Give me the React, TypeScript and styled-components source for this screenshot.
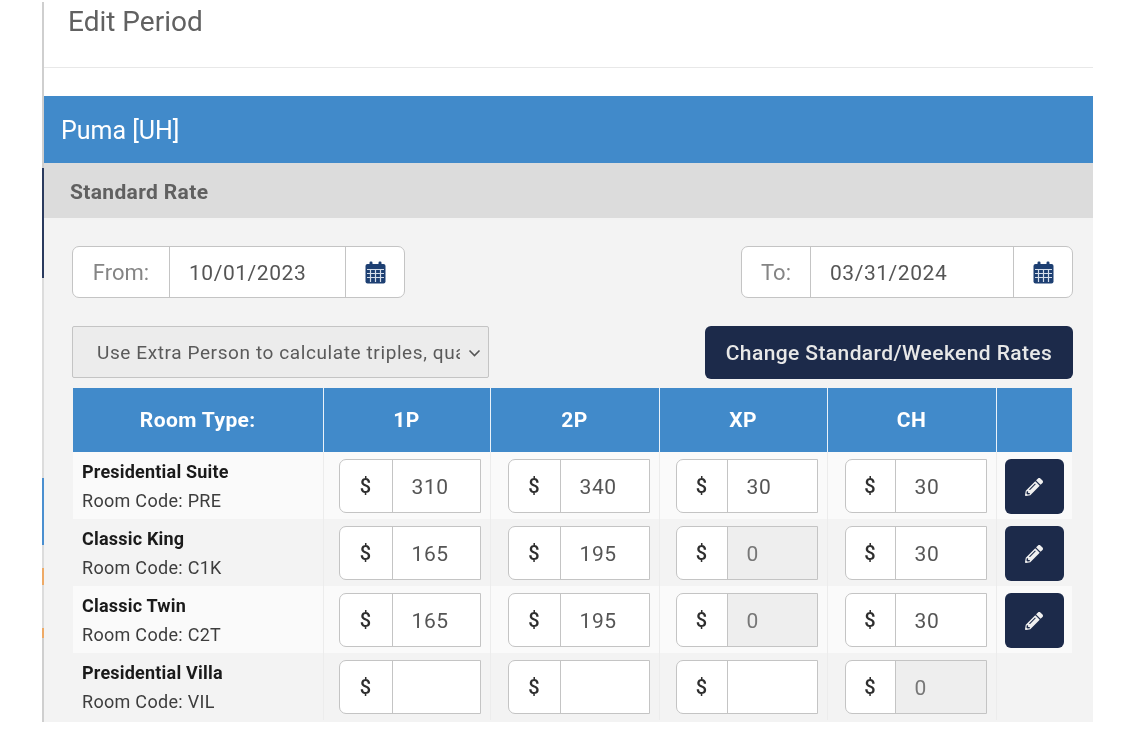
import React from 'react'
import styled, { createGlobalStyle } from 'styled-components'
import { FaPencilAlt } from 'react-icons/fa'

const GlobalStyle = createGlobalStyle`
  html, body {
    margin: 0;
    padding: 0;
    background: #ffffff;
  }
  * {
    box-sizing: border-box;
  }
`

const Page = styled.div`
  display: flex;
  width: 1130px;
  height: 738px;
  padding-top: 2px;
  background: #ffffff;
  font-family: Roboto, "Liberation Sans", sans-serif;
  filter: blur(0.5px);
`

const Rail = styled.div`
  display: flex;
  flex-direction: column;
  width: 2px;
  height: 720px;
  margin-left: 42px;
  flex-shrink: 0;
`

const RailPiece = styled.div<{ $height: number; $color: string }>`
  height: ${p => p.$height}px;
  background: ${p => p.$color};
  flex-shrink: 0;
`

const Content = styled.div`
  width: 1049px;
  display: flex;
  flex-direction: column;
  margin-top: -2px;
`

const TitleBar = styled.div`
  height: 68px;
  padding: 5px 0 0 24px;
  border-bottom: 1px solid #e8e8e8;
  color: #616161;
  font-size: 28px;
  line-height: 33px;
`

const HotelBar = styled.div`
  margin-top: 28px;
  height: 67px;
  padding: 1px 0 0 17px;
  display: flex;
  align-items: center;
  background: #418aca;
  color: #ffffff;
  font-size: 25px;
`

const RateBar = styled.div`
  height: 55px;
  padding: 2px 0 0 26px;
  display: flex;
  align-items: center;
  background: #dcdcdc;
  color: #606060;
  font-size: 21px;
  font-weight: 700;
  letter-spacing: 0.35px;
`

const Panel = styled.div`
  height: 504px;
  padding: 28px 20px 0 28px;
  background: #f3f3f3;
`

const DateRow = styled.div`
  display: flex;
  justify-content: space-between;
`

const DateGroup = styled.div<{ $width: number }>`
  display: flex;
  width: ${p => p.$width}px;
  height: 52px;
  background: #ffffff;
  border: 1px solid #c4c4c4;
  border-radius: 7px;
  color: #555555;
  font-size: 21px;
`

const DateLabel = styled.div<{ $width: number }>`
  width: ${p => p.$width}px;
  padding-top: 1px;
  display: flex;
  align-items: center;
  justify-content: center;
  flex-shrink: 0;
  border-right: 1px solid #c4c4c4;
  color: #858585;
  font-size: 22px;
`

const DateValue = styled.div`
  flex: 1;
  display: flex;
  align-items: center;
  padding: 1px 0 0 19px;
  letter-spacing: 0.55px;
`

const DateIcon = styled.div`
  width: 59px;
  display: flex;
  align-items: center;
  justify-content: center;
  flex-shrink: 0;
  border-left: 1px solid #c4c4c4;
`

const ActionRow = styled.div`
  display: flex;
  justify-content: space-between;
  margin-top: 28px;
`

const RuleSelect = styled.div`
  position: relative;
  width: 417px;
  height: 52px;
  padding: 1px 0 0 24px;
  display: flex;
  align-items: center;
  background: #ececec;
  border: 1px solid #c4c4c4;
  border-radius: 2px;
  color: #5a5a5a;
  font-size: 19px;
  letter-spacing: 0.6px;
`

const RuleText = styled.span`
  width: 363px;
  overflow: hidden;
  white-space: nowrap;
`

const Chevron = styled.svg`
  position: absolute;
  right: 7px;
  top: 22px;
`

const ChangeButton = styled.div`
  width: 368px;
  height: 53px;
  display: flex;
  align-items: center;
  justify-content: center;
  background: #1c2a4a;
  border-radius: 6px;
  color: #e8e8e8;
  font-size: 21px;
  font-weight: 500;
  letter-spacing: 0.4px;
`

const RateTable = styled.table`
  width: 999px;
  margin: 9px 0 0 1px;
  border-collapse: collapse;
  table-layout: fixed;
`

const HeadCell = styled.th`
  height: 64px;
  padding: 0;
  background: #418aca;
  border-left: 1px solid #eaf2f9;
  color: #ffffff;
  font-size: 21px;
  font-weight: 700;
  letter-spacing: 0.4px;
  text-align: center;
  &:first-child {
    border-left: none;
  }
`

const RateRow = styled.tr<{ $shade: boolean }>`
  height: 67px;
  background: ${p => (p.$shade ? '#f3f3f3' : '#fafafa')};
`

const NameCell = styled.td`
  padding: 1px 0 0 9px;
  vertical-align: middle;
`

const RoomName = styled.div`
  color: #1a1a1a;
  font-size: 18px;
  font-weight: 700;
  line-height: 29px;
  letter-spacing: 0.2px;
  white-space: nowrap;
`

const RoomCode = styled.div`
  color: #3d3d3d;
  font-size: 18px;
  line-height: 29px;
  letter-spacing: 0.3px;
  white-space: nowrap;
`

const RateCell = styled.td`
  padding: 0;
  border-left: 1px solid #ececec;
  vertical-align: middle;
`

const RateBox = styled.div<{ $inset: number }>`
  display: flex;
  width: 142px;
  height: 54px;
  margin-left: ${p => p.$inset}px;
  border: 1px solid #c4c4c4;
  border-radius: 7px 0 0 7px;
  background: #ffffff;
  font-size: 21px;
  overflow: hidden;
`

const Dollar = styled.div<{ $width: number }>`
  width: ${p => p.$width}px;
  padding-top: 1px;
  display: flex;
  align-items: center;
  justify-content: center;
  flex-shrink: 0;
  border-right: 1px solid #c4c4c4;
  color: #2e2e2e;
  font-size: 20px;
  font-weight: 500;
`

const RateValue = styled.div<{ $locked: boolean }>`
  flex: 1;
  display: flex;
  align-items: center;
  padding: 2px 0 0 19px;
  background: ${p => (p.$locked ? '#eeeeee' : '#ffffff')};
  color: ${p => (p.$locked ? '#777777' : '#555555')};
  letter-spacing: 0.6px;
`

const EditButton = styled.div`
  width: 59px;
  height: 55px;
  margin: 2px 0 0 8px;
  display: flex;
  align-items: center;
  justify-content: center;
  background: #1c2a4a;
  border-radius: 6px;
  color: #f0f0f0;
  font-size: 18px;
`

const railPieces = [
  { height: 166, color: '#cfcfcf' },
  { height: 110, color: '#2a3a5e' },
  { height: 200, color: '#dcdcdc' },
  { height: 67, color: '#4a8fd0' },
  { height: 23, color: '#dcdcdc' },
  { height: 17, color: '#eeaa66' },
  { height: 43, color: '#dcdcdc' },
  { height: 10, color: '#eeaa66' },
  { height: 84, color: '#cfcfcf' },
]

const columns = [250, 167, 169, 168, 169, 76]
const insets = [15, 17, 16, 17]
const dollarWidths = [53, 52, 51, 50]

const rooms = [
  { name: 'Presidential Suite', code: 'PRE', rates: ['310', '340', '30', '30'], locked: [] as number[], editable: true },
  { name: 'Classic King', code: 'C1K', rates: ['165', '195', '0', '30'], locked: [2], editable: true },
  { name: 'Classic Twin', code: 'C2T', rates: ['165', '195', '0', '30'], locked: [2], editable: true },
  { name: 'Presidential Villa', code: 'VIL', rates: ['', '', '', '0'], locked: [3], editable: false },
]

const CalendarIcon = () => (
  <svg width="21" height="23" viewBox="0 0 21 23">
    <rect x="0.5" y="3" width="20" height="19.5" rx="2" fill="#1d3f72" />
    <rect x="4.5" y="0.5" width="3" height="5" rx="1.2" fill="#1d3f72" />
    <rect x="13.5" y="0.5" width="3" height="5" rx="1.2" fill="#1d3f72" />
    <path
      d="M2 8.5H19M2 12.5H19M2 16.5H19M5.5 8.5V21M10.5 8.5V21M15.5 8.5V21"
      stroke="#d5deea"
      strokeWidth="1.2"
      fill="none"
    />
  </svg>
)

export default function App() {
  return (
    <Page>
      <GlobalStyle />
      <Rail>
        {railPieces.map((piece, index) => (
          <RailPiece key={index} $height={piece.height} $color={piece.color} />
        ))}
      </Rail>
      <Content>
        <TitleBar>Edit Period</TitleBar>
        <HotelBar>Puma [UH]</HotelBar>
        <RateBar>Standard Rate</RateBar>
        <Panel>
          <DateRow>
            <DateGroup $width={333}>
              <DateLabel $width={97}>From:</DateLabel>
              <DateValue>10/01/2023</DateValue>
              <DateIcon><CalendarIcon /></DateIcon>
            </DateGroup>
            <DateGroup $width={332}>
              <DateLabel $width={69}>To:</DateLabel>
              <DateValue>03/31/2024</DateValue>
              <DateIcon><CalendarIcon /></DateIcon>
            </DateGroup>
          </DateRow>
          <ActionRow>
            <RuleSelect>
              <RuleText>Use Extra Person to calculate triples, quads and more</RuleText>
              <Chevron width="13" height="8" viewBox="0 0 13 8" fill="none">
                <path d="M1.5 1.5L6.5 6.5L11.5 1.5" stroke="#555555" strokeWidth="1.6" />
              </Chevron>
            </RuleSelect>
            <ChangeButton>Change Standard/Weekend Rates</ChangeButton>
          </ActionRow>
          <RateTable>
            <colgroup>
              {columns.map((width, index) => (
                <col key={index} width={width} />
              ))}
            </colgroup>
            <thead>
              <tr>
                <HeadCell>Room Type:</HeadCell>
                <HeadCell>1P</HeadCell>
                <HeadCell>2P</HeadCell>
                <HeadCell>XP</HeadCell>
                <HeadCell>CH</HeadCell>
                <HeadCell />
              </tr>
            </thead>
            <tbody>
              {rooms.map((room, index) => (
                <RateRow key={room.code} $shade={index % 2 === 1}>
                  <NameCell>
                    <RoomName>{room.name}</RoomName>
                    <RoomCode>Room Code: {room.code}</RoomCode>
                  </NameCell>
                  {room.rates.map((rate, rateIndex) => (
                    <RateCell key={rateIndex}>
                      <RateBox $inset={insets[rateIndex]}>
                        <Dollar $width={dollarWidths[rateIndex]}>$</Dollar>
                        <RateValue $locked={room.locked.includes(rateIndex)}>{rate}</RateValue>
                      </RateBox>
                    </RateCell>
                  ))}
                  <RateCell>
                    {room.editable && (
                      <EditButton><FaPencilAlt /></EditButton>
                    )}
                  </RateCell>
                </RateRow>
              ))}
            </tbody>
          </RateTable>
        </Panel>
      </Content>
    </Page>
  )
}
